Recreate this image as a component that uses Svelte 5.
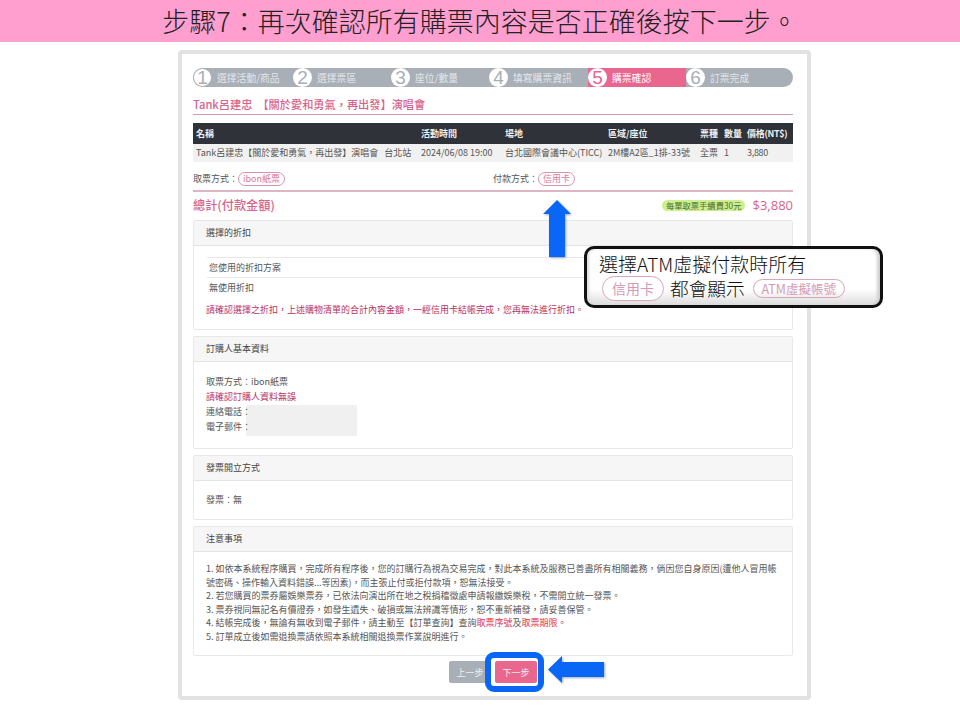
<script>
  const steps = [
    { n: 1, label: '選擇活動/商品', w: 100, outlined: true },
    { n: 2, label: '選擇票區', w: 98 },
    { n: 3, label: '座位/數量', w: 98 },
    { n: 4, label: '填寫購票資訊', w: 99 },
    { n: 5, label: '購票確認', w: 98, active: true },
    { n: 6, label: '訂票完成', w: 107 }
  ];
</script>

<header class="banner">步驟7：再次確認所有購票內容是否正確後按下一步。</header>

<main class="sheet">
  <ol class="steps">
    {#each steps as s}
      <li class:active={s.active} class:outlined={s.outlined} style="width:{s.w}px"><b>{s.n}</b><span>{s.label}</span></li>
    {/each}
  </ol>

  <h1>Tank呂建忠&nbsp;&nbsp;【關於愛和勇氣，再出發】演唱會</h1>

  <div class="tbl head">
    <span class="c1">名稱</span><span class="c2">活動時間</span><span class="c3">場地</span><span class="c4">區域/座位</span><span class="c5">票種</span><span class="c6">數量</span><span class="c7">價格(NT$)</span>
  </div>
  <div class="tbl row">
    <span class="c1">Tank呂建忠【關於愛和勇氣，再出發】演唱會&nbsp;&nbsp;&nbsp;台北站</span><span class="c2">2024/06/08 19:00</span><span class="c3">台北國際會議中心(TICC)</span><span class="c4">2M樓A2區_1排-33號</span><span class="c5">全票</span><span class="c6">1</span><span class="c7">3,880</span>
  </div>

  <div class="methods">
    <div class="m1">取票方式：<em>ibon紙票</em></div>
    <div>付款方式：<em>信用卡</em></div>
  </div>

  <div class="total">
    <strong>總計(付款金額)</strong>
    <div class="sum"><small>每單取票手續費30元</small><span>$3,880</span></div>
  </div>

  <section class="panel p1">
    <h2>選擇的折扣</h2>
    <div class="body">
      <div class="d1">您使用的折扣方案</div>
      <div class="d2">無使用折扣</div>
      <p class="warn">請確認選擇之折扣，上述購物清單的合計內容金額，一經信用卡結帳完成，您再無法進行折扣。</p>
    </div>
  </section>

  <section class="panel p2">
    <h2>訂購人基本資料</h2>
    <div class="body info">
      <i class="mask"></i>
      <div>取票方式：ibon紙票</div>
      <div class="warn">請確認訂購人資料無誤</div>
      <div>連絡電話：</div>
      <div>電子郵件：</div>
    </div>
  </section>

  <section class="panel p3">
    <h2>發票開立方式</h2>
    <div class="body">發票：無</div>
  </section>

  <section class="panel p4">
    <h2>注意事項</h2>
    <div class="body notes">
      <div>1. 如依本系統程序購買，完成所有程序後，您的訂購行為視為交易完成，對此本系統及服務已善盡所有相關義務，倘因您自身原因(遭他人冒用帳<br />號密碼、操作輸入資料錯誤...等因素)，而主張止付或拒付款項，恕無法接受。</div>
      <div>2. 若您購買的票券屬娛樂票券，已依法向演出所在地之稅捐稽徵處申請報繳娛樂稅，不需開立統一發票。</div>
      <div>3. 票券視同無記名有價證券，如發生遺失、破損或無法辨識等情形，恕不重新補發，請妥善保管。</div>
      <div>4. 結帳完成後，無論有無收到電子郵件，請主動至【訂單查詢】查詢<u>取票序號</u>及<u>取票期限</u>。</div>
      <div>5. 訂單成立後如需退換票請依照本系統相關退換票作業說明進行。</div>
    </div>
  </section>

  <div class="actions">
    <button class="prev">上一步</button>
    <button class="next">下一步</button>
  </div>

  <svg class="arrow up" viewBox="0 0 28 57" aria-hidden="true"><path d="M14 0 L28 14 L22 14 L22 57 L6 57 L6 14 L0 14 Z" /></svg>
  <svg class="arrow left" viewBox="0 0 56 27" aria-hidden="true"><path d="M0 13.5 L14 0 L14 6 L56 6 L56 21 L14 21 L14 27 Z" /></svg>
  <i class="ring"></i>

  <aside class="callout">
    <div class="l1">選擇ATM虛擬付款時所有</div>
    <div class="l2"><em class="big">信用卡</em><span>都會顯示</span><em class="atm">ATM虛擬帳號</em></div>
  </aside>
</main>

<style>
  :global(body) {
    margin: 0;
    background: #fff;
    font-family: "Noto Sans CJK TC", "Noto Sans", sans-serif;
  }
  .banner {
    height: 42px;
    background: #ff9fcf;
    color: #222;
    font-size: 27px;
    font-weight: 300;
    line-height: 41px;
    text-align: center;
  }
  .sheet {
    position: relative;
    box-sizing: border-box;
    width: 633px;
    height: 650px;
    margin: 8px 0 0 178px;
    padding: 14px 0 0 11px;
    background: #fff;
    border: 4px solid #e2e2e2;
    border-radius: 4px;
    font-size: 9px;
    color: #555;
    line-height: 12px;
  }
  .steps {
    display: flex;
    width: 600px;
    height: 19px;
    margin: 0;
    padding: 0;
    list-style: none;
    background: #a8afb7;
    border-radius: 10px;
    overflow: hidden;
    font-size: 9.8px;
  }
  .steps li {
    display: flex;
    align-items: center;
    gap: 5px;
    box-sizing: border-box;
    color: #e4e7ea;
    white-space: nowrap;
  }
  .steps li.active { background: #e9668f; color: #fff; }
  .steps b {
    flex: none;
    width: 19px;
    height: 19px;
    border-radius: 50%;
    background: #fff;
    color: #a8afb7;
    font: 400 19px/19px "Liberation Sans", sans-serif;
    text-align: center;
  }
  .steps li.outlined b { box-sizing: border-box; border: 1px solid #a8afb7; line-height: 17px; }
  .steps li.active b { color: #e9668f; }
  h1 {
    margin: 10px 0 0;
    padding-bottom: 2px;
    width: 600px;
    height: 15px;
    border-bottom: 1px solid #d79ab2;
    font-size: 11.2px;
    line-height: 15px;
    font-weight: 500;
    color: #d9638d;
    white-space: nowrap;
  }
  .tbl {
    display: flex;
    align-items: center;
    width: 600px;
    white-space: nowrap;
  }
  .tbl span { flex: none; padding-left: 3px; box-sizing: border-box; }
  .head {
    height: 21px;
    margin-top: 8px;
    background: #2f3238;
    color: #eee;
    font-weight: 700;
  }
  .row { height: 18px; background: #f1f1f1; }
  .c1 { width: 225px; }
  .c2 { width: 84px; }
  .c3 { width: 103px; }
  .c4 { width: 92px; }
  .c5 { width: 24px; }
  .c6 { width: 23px; }
  .c7 { width: 49px; letter-spacing: -0.3px; }
  .methods {
    display: flex;
    align-items: center;
    width: 600px;
    height: 23px;
    padding-top: 5px;
    border-bottom: 2px solid #dcb6c5;
    font-size: 9px;
  }
  .m1 { width: 300px; }
  em {
    display: inline-block;
    font-style: normal;
    padding: 0 4px;
    border: 1px solid #d992ad;
    border-radius: 9px;
    color: #d9789d;
    line-height: 12px;
    font-size: 9px;
  }
  .total {
    display: flex;
    justify-content: space-between;
    align-items: center;
    width: 600px;
    height: 26px;
    margin-bottom: 2px;
  }
  .total strong { font-size: 12.2px; font-weight: 500; color: #d9638d; }
  .sum { display: flex; align-items: center; gap: 7px; }
  .sum small {
    padding: 0 4px;
    background: #cdf08c;
    border-radius: 6px;
    font-size: 8.3px;
    line-height: 11px;
    color: #4c6b32;
  }
  .sum span { font: 13px "Open Sans", sans-serif; color: #d9638d; }
  .panel {
    box-sizing: border-box;
    width: 600px;
    margin-bottom: 6px;
    border: 1px solid #e8e8e8;
    border-radius: 2px;
    overflow: hidden;
  }
  .panel h2 {
    height: 24px;
    margin: 0;
    padding-left: 12px;
    background: #f6f6f6;
    border-bottom: 1px solid #e4e4e4;
    font-size: 9px;
    line-height: 23px;
    font-weight: 400;
    color: #444;
  }
  .p1 { height: 110px; }
  .p2 { height: 113px; }
  .p3 { height: 65px; }
  .p4 { height: 130px; margin-bottom: 0; }
  .body { position: relative; padding: 12px; }
  .p1 .body { padding: 11px 13px 0; }
  .d1, .d2 { height: 19px; line-height: 19px; padding-left: 2px; border-top: 1px solid #e8e8e8; }
  .d2 { height: 18px; }
  .warn { color: #b8305f; }
  p.warn { margin: 8px 0 0 -1px; white-space: nowrap; font-size: 9px; }
  .info { padding-top: 12px; line-height: 15px; }
  .info div { position: relative; }
  .mask {
    position: absolute;
    left: 52px;
    top: 43px;
    width: 111px;
    height: 31px;
    background: #f0f0f0;
  }
  .p3 .body { padding-top: 13px; }
  .notes { padding-top: 10px; font-size: 9px; line-height: 13.6px; white-space: nowrap; color: #555; }
  .notes u { text-decoration: none; color: #e2304f; }
  .actions {
    display: flex;
    justify-content: center;
    gap: 4px;
    width: 600px;
    margin-top: 5px;
  }
  button {
    width: 42px;
    height: 22px;
    padding: 0;
    border: 0;
    border-radius: 2px;
    color: #eee;
    font: 9px "Noto Sans CJK TC", sans-serif;
  }
  .prev { background: #a8afb7; }
  .next { background: #e9668f; }
  .arrow { position: absolute; fill: #0a66f5; filter: drop-shadow(1px 1px 1px rgba(60, 90, 140, 0.5)); }
  .up { left: 361px; top: 146px; width: 28px; height: 57px; }
  .left { left: 366px; top: 602px; width: 56px; height: 27px; }
  .ring {
    position: absolute;
    left: 303px;
    top: 598px;
    box-sizing: border-box;
    width: 59px;
    height: 40px;
    border: 6px solid #0a66f5;
    border-radius: 9px;
  }
  .callout {
    position: absolute;
    left: 402px;
    top: 192px;
    box-sizing: border-box;
    width: 299px;
    height: 62px;
    padding: 4px 0 0 12px;
    background: linear-gradient(#fff 72%, #dcdcdc);
    border: 3px solid #111;
    border-radius: 10px;
    box-shadow: inset 3px 0 3px -1px #d8d8d8, inset -4px 0 3px -1px #d0d0d0;
    color: #111;
    font-size: 19px;
    font-weight: 300;
    line-height: 22px;
    white-space: nowrap;
  }
  .l2 { display: flex; align-items: center; gap: 6px; height: 26px; font-size: 18.7px; }
  .callout em { border-radius: 13px; background: #fff; color: #d59ab5; border-color: #d9a6bc; font-weight: 400; }
  .callout .big { box-sizing: border-box; margin-left: 3px; width: 62px; height: 25px; padding: 0; border-width: 1.5px; font-size: 14px; line-height: 22px; text-align: center; }
  .callout .atm { box-sizing: border-box; width: 92px; height: 19px; margin-left: 2px; padding: 0; font-size: 12.5px; line-height: 17px; text-align: center; background: transparent; }
</style>
